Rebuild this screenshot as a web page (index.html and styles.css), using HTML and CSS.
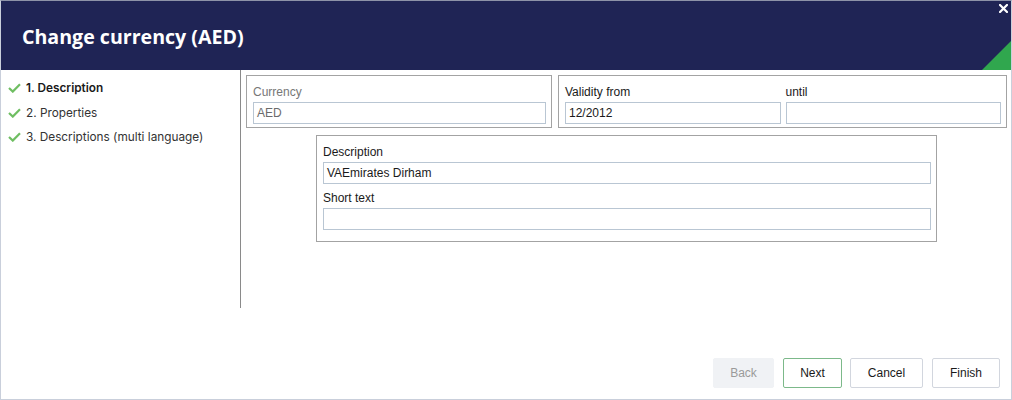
FILE: index.html
```html
<!DOCTYPE html>
<html>
<head>
<meta charset="utf-8">
<link rel="stylesheet" href="styles.css">
</head>
<body>
<div class="window">
  <header class="header">
    <h1 class="title">Change currency (AED)</h1>
    <button class="close" aria-label="Close">
      <svg width="9" height="9" viewBox="0 0 9 9"><path d="M1 1 L8 8 M8 1 L1 8" stroke="#fff" stroke-width="2.2" stroke-linecap="square"/></svg>
    </button>
    <div class="corner"></div>
  </header>
  <div class="middle">
    <nav class="nav">
      <div class="step active"><svg class="check" width="13" height="10" viewBox="0 0 13 10"><path d="M1 5 L4.8 8.6 L12 1.2" fill="none" stroke="#6fbe62" stroke-width="2.2"/></svg><span>1. Description</span></div>
      <div class="step"><svg class="check" width="13" height="10" viewBox="0 0 13 10"><path d="M1 5 L4.8 8.6 L12 1.2" fill="none" stroke="#6fbe62" stroke-width="2.2"/></svg><span>2. Properties</span></div>
      <div class="step"><svg class="check" width="13" height="10" viewBox="0 0 13 10"><path d="M1 5 L4.8 8.6 L12 1.2" fill="none" stroke="#6fbe62" stroke-width="2.2"/></svg><span>3. Descriptions (multi language)</span></div>
    </nav>
    <main class="content">
      <div class="row">
        <fieldset class="group currency">
          <div class="label muted">Currency</div>
          <div class="input muted">AED</div>
        </fieldset>
        <fieldset class="group validity">
          <div class="col">
            <div class="label">Validity from</div>
            <div class="input">12/2012</div>
          </div>
          <div class="col">
            <div class="label">until</div>
            <div class="input"></div>
          </div>
        </fieldset>
      </div>
      <fieldset class="group description">
        <div class="label">Description</div>
        <div class="input">VAEmirates Dirham</div>
        <div class="label second">Short text</div>
        <div class="input"></div>
      </fieldset>
    </main>
  </div>
  <footer class="footer">
    <button class="btn back disabled">Back</button>
    <button class="btn next primary">Next</button>
    <button class="btn cancel">Cancel</button>
    <button class="btn finish">Finish</button>
  </footer>
</div>
</body>
</html>
```

FILE: styles.css
```css
* { box-sizing: border-box; }
html, body { margin: 0; padding: 0; background: #fff; }
body { width: 1012px; height: 400px; overflow: hidden; }

.window {
  width: 1012px;
  height: 400px;
  border: 1px solid #c9cfdb;
  border-top-color: #8d93a8;
  display: flex;
  flex-direction: column;
  background: #fff;
}

.header {
  position: relative;
  height: 69px;
  flex: none;
  background: #1f2455;
  display: flex;
  align-items: center;
  padding-left: 21px;
  overflow: hidden;
}
.title {
  margin: 0;
  color: #fff;
  font-family: "Open Sans", "Liberation Sans", sans-serif;
  font-weight: 700;
  font-size: 19.6px;
  padding-top: 1px;
}
.close {
  position: absolute;
  top: 2px;
  right: 2px;
  width: 11px;
  height: 11px;
  padding: 0;
  border: 0;
  background: transparent;
  display: flex;
  align-items: center;
  justify-content: center;
}
.corner {
  position: absolute;
  right: 0;
  bottom: 0;
  width: 29px;
  height: 29px;
  background: #30a74e;
  clip-path: polygon(100% 0, 100% 100%, 0 100%);
}

.middle {
  flex: 1;
  display: flex;
  align-items: flex-start;
}

.nav {
  width: 240px;
  height: 238px;
  flex: none;
  border-right: 1px solid #8a8a8a;
  padding-top: 6px;
  padding-left: 7px;
  font-family: "Inter", "Noto Sans", sans-serif;
  font-size: 11.8px;
  color: #333;
}
.step {
  height: 24.5px;
  display: flex;
  align-items: center;
  gap: 5px;
}
.step.active { color: #1a1a1a; font-weight: 600; }
.check { flex: none; }

.content {
  flex: 1;
  padding: 5px 4px 0 5px;
  font-family: "Liberation Sans", Arial, sans-serif;
  font-size: 12px;
  color: #1a1a1a;
}
.row {
  display: flex;
  gap: 6px;
}
.group {
  margin: 0;
  min-width: 0;
  border: 1px solid #a3a3a3;
  padding: 8px 5px 3px 6px;
}
.currency { width: 306px; }
.validity {
  flex: 1;
  display: flex;
  gap: 5px;
}
.col { flex: 1; min-width: 0; }

.label {
  height: 16px;
  line-height: 16px;
  margin-bottom: 2px;
}
.label.second { margin-top: 6px; }
.muted { color: #777; }
.input {
  height: 22px;
  border: 1px solid #b9c6d3;
  line-height: 20px;
  padding: 0 3px;
  background: #fff;
}
.input.muted { color: #6b6b6b; }

.description {
  width: 621px;
  margin-left: 70px;
  margin-top: 7px;
  padding-bottom: 11px;
}

.footer {
  flex: none;
  display: flex;
  justify-content: flex-end;
  gap: 9px;
  padding: 0 11px 11px 0;
}
.btn {
  height: 30px;
  padding: 0;
  border: 1px solid #d2d6de;
  border-radius: 2px;
  background: #fff;
  font-family: "Liberation Sans", Arial, sans-serif;
  font-size: 12px;
  color: #1a1a1a;
}
.back { width: 61px; }
.next { width: 59px; }
.cancel { width: 73px; margin-left: -1px; }
.finish { width: 68px; }
.btn.disabled { background: #f0f2f5; border-color: #f0f2f5; color: #9a9a9a; }
.btn.primary { border-color: #7cb98a; }
```
